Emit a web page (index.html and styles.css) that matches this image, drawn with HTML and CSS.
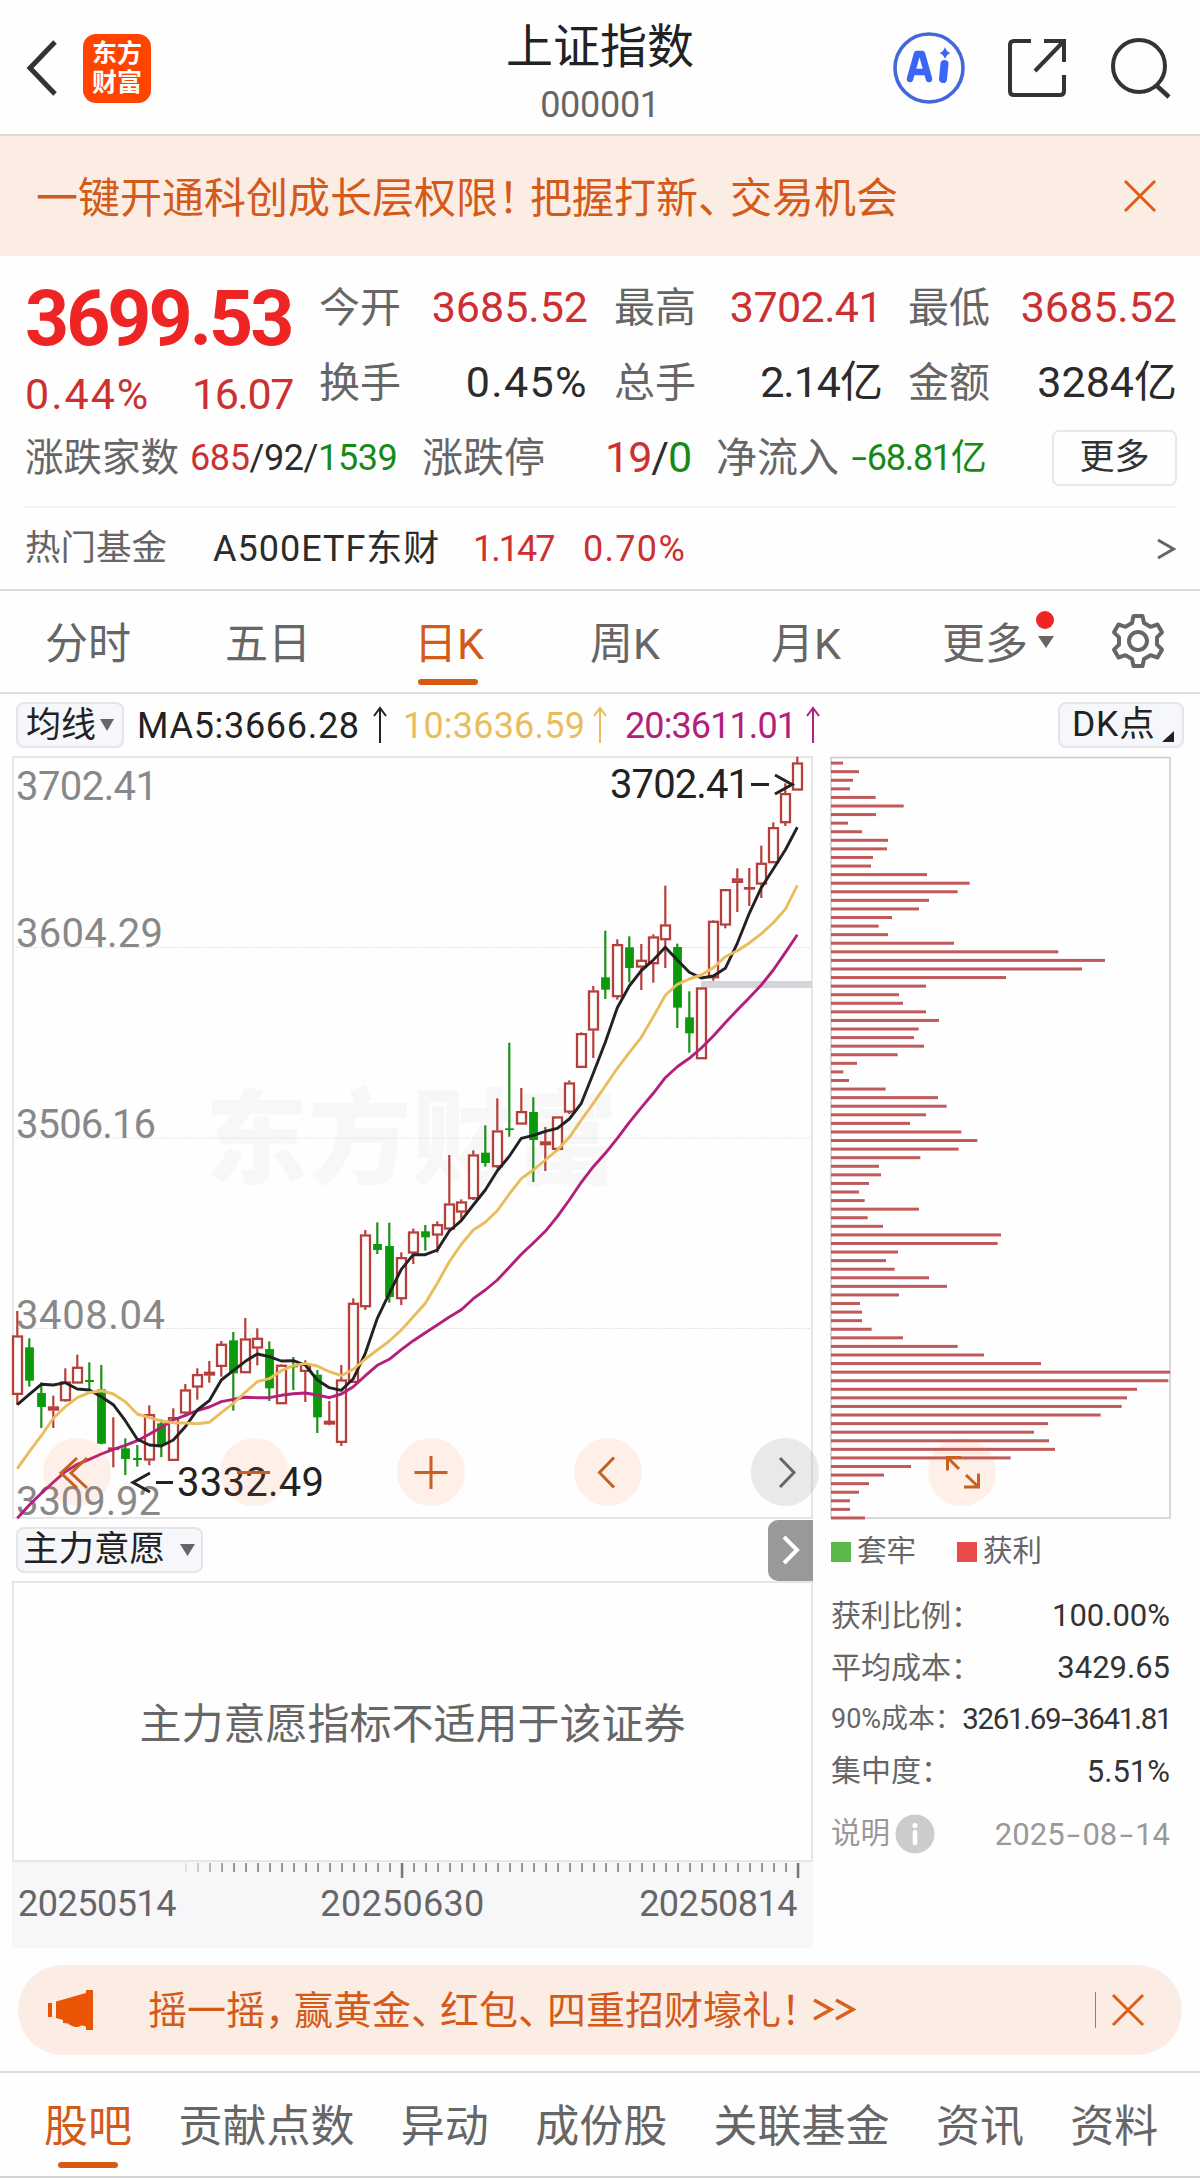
FILE: index.html
```html
<!DOCTYPE html>
<html lang="zh-CN">
<head>
<meta charset="utf-8">
<title>上证指数 000001</title>
<link rel="stylesheet" href="styles.css">
</head>
<body>
<header class="topbar">
  <div class="topbar-left">
    <svg class="back" width="34" height="58" viewBox="0 0 34 58"><path d="M30 3 5 29l25 26" fill="none" stroke="#333" stroke-width="5"/></svg>
    <div class="logo"><span>东方</span><span>财富</span></div>
  </div>
  <div class="topbar-title">
    <h1>上证指数</h1>
    <div class="code">000001</div>
  </div>
  <div class="topbar-right">
    <svg width="74" height="74" viewBox="0 0 74 74">
      <circle cx="37" cy="37" r="34" fill="none" stroke="#4468dc" stroke-width="3.6"/>
      <path d="M18 48 25 23h5l7 25M21 41h13" fill="none" stroke="#3a66f6" stroke-width="6.5" stroke-linejoin="round" stroke-linecap="round"/>
      <path d="M52.500 33 51 48" stroke="#3a66f6" stroke-width="8" stroke-linecap="round"/>
      <path d="M53 16q1.500 5 5.500 6-4 1.500-5.500 6-1.500-4.500-5.500-6 4-1 5.500-6z" fill="#3a66f6"/>
    </svg>
    <svg width="60" height="60" viewBox="0 0 60 60"><path d="M23 3H6q-4 0-4 4v46q0 4 4 4h46q4 0 4-4V37M36 3h20v21M55 4 27 33" fill="none" stroke="#333" stroke-width="4"/></svg>
    <svg width="62" height="62" viewBox="0 0 62 62"><circle cx="29" cy="29" r="26" fill="none" stroke="#333" stroke-width="4"/><path d="m47 49 12 11" stroke="#333" stroke-width="4.500"/></svg>
  </div>
</header>

<section class="promo">
  <span class="promo-text">一键开通科创成长层权限<i class="tight">！</i>把握打新<i class="tight">、</i>交易机会</span>
  <svg width="34" height="34" viewBox="0 0 34 34"><path d="m2 2 30 30M32 2 2 32" stroke="#de5d17" stroke-width="3"/></svg>
</section>

<section class="quote">
  <div class="quote-top">
    <div class="price">
      <div class="last">3699.53</div>
      <div class="change"><span class="pct">0.44%</span><span class="amt">16.07</span></div>
    </div>
    <dl class="stats">
      <div><dt>今开</dt><dd class="up">3685.52</dd></div>
      <div><dt>最高</dt><dd class="up high">3702.41</dd></div>
      <div><dt>最低</dt><dd class="up">3685.52</dd></div>
      <div><dt>换手</dt><dd class="wide">0.45%</dd></div>
      <div><dt>总手</dt><dd class="narrow">2.14亿</dd></div>
      <div><dt>金额</dt><dd>3284亿</dd></div>
    </dl>
  </div>
  <div class="breadth">
    <span class="lbl-s">涨跌家数</span>
    <span class="counts"><b class="up">685</b>/92/<b class="down">1539</b></span>
    <span class="lbl halt">涨跌停</span>
    <span class="limits"><b class="up">19</b>/<b class="down">0</b></span>
    <span class="lbl">净流入</span>
    <span class="flow down"><i class="dash">-</i>68.81亿</span>
    <button class="more">更多</button>
  </div>
  <div class="fund">
    <span class="fund-label">热门基金</span>
    <span class="fund-name">A500ETF东财</span>
    <span class="up fund-price">1.147</span>
    <span class="up fund-pct">0.70%</span>
    <svg class="fund-go" width="20" height="24" viewBox="0 0 20 24"><path d="m1 3 15.500 9L1 21" fill="none" stroke="#666" stroke-width="3"/></svg>
  </div>
</section>

<nav class="periods">
  <span>分时</span><span>五日</span><span class="active">日K</span><span>周K</span><span>月K</span>
  <span class="drop">更多<svg width="16" height="12" viewBox="0 0 16 12"><path d="M0 0h16L8 12z" fill="#666"/></svg></span>
  <svg class="gear" width="56" height="56" viewBox="0 0 56 56"><path d="M23.500 3h9l1.500 7 6.500 3.800 7-2.300 4.500 7.800-5 5v7.400l5 5-4.500 7.800-7-2.300L34 46l-1.500 7h-9L22 46l-6.500-3.800-7 2.300L4 36.700l5-5v-7.400l-5-5 4.500-7.800 7 2.300L22 10z" fill="none" stroke="#666" stroke-width="4" stroke-linejoin="round"/><circle cx="28" cy="28" r="9" fill="none" stroke="#666" stroke-width="4"/></svg>
</nav>

<section class="indicators">
  <button class="chip ma-chip">均线<svg width="14" height="12" viewBox="0 0 14 12"><path d="M0 0h14L7 12z" fill="#666"/></svg></button>
  <span class="ma5">MA5:3666.28</span><svg class="arrow" width="14" height="36" viewBox="0 0 14 36"><path d="M7 36V2M1 9l6-8 6 8" fill="none" stroke="#222" stroke-width="2"/></svg>
  <span class="ma10">10:3636.59</span><svg class="arrow" width="14" height="36" viewBox="0 0 14 36"><path d="M7 36V2M1 9l6-8 6 8" fill="none" stroke="#e9bd5c" stroke-width="2"/></svg>
  <span class="ma20">20:3611.01</span><svg class="arrow" width="14" height="36" viewBox="0 0 14 36"><path d="M7 36V2M1 9l6-8 6 8" fill="none" stroke="#b2207c" stroke-width="2"/></svg>
  <button class="chip dk-chip">DK点<svg width="12" height="11" viewBox="0 0 12 11"><path d="M12 0v11H0z" fill="#222"/></svg></button>
</section>

<main class="charts">
  <div class="main-col">
    <svg class="kline" id="kline" width="804" height="763" viewBox="12 756 804 763"></svg>
    <div class="sub-head">
      <button class="chip sub-chip">主力意愿<svg width="15" height="12" viewBox="0 0 15 12"><path d="M0 0h15L7.500 12z" fill="#666"/></svg></button>
      <button class="fold"><svg width="20" height="30" viewBox="0 0 20 30"><path d="m3 2 13 13L3 28" fill="none" stroke="#fff" stroke-width="4"/></svg></button>
    </div>
    <div class="sub-pane">主力意愿指标不适用于该证券</div>
    <div class="axis">
      <svg id="ticks" width="801" height="18" viewBox="12 1862 801 18"></svg>
      <div class="dates"><span>20250514</span><span class="mid">20250630</span><span>20250814</span></div>
    </div>
  </div>
  <aside class="chips-col">
    <svg id="profile" width="342" height="763" viewBox="830 756 342 763"></svg>
    <div class="legend"><i class="sq green"></i><span>套牢</span><i class="sq red"></i><span>获利</span></div>
    <dl class="cost">
      <div><dt>获利比例：</dt><dd>100.00%</dd></div>
      <div><dt>平均成本：</dt><dd>3429.65</dd></div>
      <div class="range"><dt>90%成本：</dt><dd>3261.69<i class="dash">-</i>3641.81</dd></div>
      <div><dt>集中度：</dt><dd>5.51%</dd></div>
    </dl>
    <div class="note">
      <span>说明</span>
      <svg width="40" height="40" viewBox="0 0 40 40"><circle cx="20" cy="20" r="19.500" fill="#ccc"/><circle cx="20" cy="11.500" r="2.600" fill="#fff"/><path d="M20 18v11" stroke="#fff" stroke-width="4.600" stroke-linecap="round"/></svg>
      <span class="note-date">2025<i class="dash">-</i>08<i class="dash">-</i>14</span>
    </div>
  </aside>
  <div class="controls">
    <button><svg width="68" height="68" viewBox="0 0 68 68"><path d="M34 20 18 35l16 15M44 20 28 35l16 15"/></svg></button>
    <button><svg width="68" height="68" viewBox="0 0 68 68"><path d="M17 34.500h33"/></svg></button>
    <button><svg width="68" height="68" viewBox="0 0 68 68"><path d="M17.500 34.500h33M34 18v33"/></svg></button>
    <button><svg width="68" height="68" viewBox="0 0 68 68"><path d="M40 19.500 25.500 34.500 40 49.500"/></svg></button>
    <button class="mute"><svg width="68" height="68" viewBox="0 0 68 68"><path d="M29 20 43 34.500 29 49"/></svg></button>
    <button><svg width="68" height="68" viewBox="0 0 68 68"><path d="M19.500 32.500V19.500H33M20 20l11 11M50.500 35.500V49H36M50 48.500 38 37"/></svg></button>
  </div>
</main>

<section class="shake">
  <svg width="46" height="40" viewBox="0 0 46 40"><path d="M0 13h4v14H0zM8 11.500 38 3V0h7v40h-7v-3.500l-4.500-1.300q-3.500 3-8 1.300t-5.500-3l-5-.500V30L8 28z" fill="#e95504"/></svg>
  <span class="shake-text">摇一摇<i class="tight">，</i>赢黄金<i class="tight">、</i>红包<i class="tight">、</i>四重招财壕礼<i class="tight">！</i></span>
  <svg class="dbl" width="42" height="24" viewBox="0 0 42 24"><path d="m1 2 17 9.500L1 21M23 2l17 9.500L23 21" fill="none" stroke="#d9601f" stroke-width="3.500"/></svg>
  <i class="bar"></i>
  <svg width="34" height="34" viewBox="0 0 34 34"><path d="m2 2 30 30M32 2 2 32" stroke="#de5d17" stroke-width="3"/></svg>
</section>

<nav class="bottom-tabs">
  <span class="active">股吧</span><span>贡献点数</span><span>异动</span><span>成份股</span><span>关联基金</span><span>资讯</span><span>资料</span>
</nav>
<script src="chart.js"></script>
</body>
</html>
```
FILE: styles.css
```css
* { box-sizing: border-box; }
body, h1, dl, dd { margin: 0; }
body {
  width: 1200px;
  background: #fefefe;
  color: #2b2b2b;
  font-family: Roboto, "Noto Sans CJK SC", sans-serif;
  line-height: 1;
  white-space: nowrap;
}
i, b { font-style: normal; font-weight: 400; }
svg { display: block; flex: none; overflow: visible; }
button { font: inherit; color: inherit; border: 0; padding: 0; background: none; }
.up { color: #cc3030; }
.down { color: #168a16; }
.tight { letter-spacing: -10px; }
.dash { display: inline-block; transform: scaleX(1.55); margin: 0 .12em 0 .08em; }

/* top bar */
.topbar {
  height: 136px;
  display: grid;
  grid-template-columns: 1fr auto 1fr;
  border-bottom: 2px solid #dadada;
}
.topbar-left { display: flex; align-items: center; padding: 2px 0 0 25px; gap: 24px; }
.logo {
  width: 68px; height: 69px; border-radius: 13px; background: #ff4400; color: #fff;
  display: flex; flex-direction: column; align-items: center; justify-content: center;
  font-size: 25px; font-weight: 700; line-height: 29px;
}
.topbar-title { text-align: center; padding-top: 20px; }
.topbar-title h1 { font-size: 47px; font-weight: 400; line-height: 54px; color: #222; }
.code { font-size: 36px; line-height: 40px; margin-top: 11px; color: #666; letter-spacing: -.3px; }
.topbar-right { display: flex; align-items: center; justify-content: flex-end; padding: 2px 28px 0 0; gap: 42px; }

/* promo strip */
.promo {
  height: 120px; background: #fcede4; color: #d45a1a;
  display: flex; align-items: center; justify-content: space-between;
  padding: 0 43px 0 36px; font-size: 42px;
}
.promo-text { padding-top: 5px; }

/* quote */
.quote { height: 335px; }
.quote-top {
  display: grid; grid-template-columns: 268px 858px; column-gap: 26px;
  height: 164px; padding: 14px 23px 0 25px;
}
.price { padding-top: 9px; }
.last { font-size: 77px; font-weight: 700; line-height: 80px; letter-spacing: -3px; color: #ee2524; }
.change { display: flex; justify-content: space-between; font-size: 43px; line-height: 70px; color: #cc3030; }
.pct { letter-spacing: 2px; }
.amt { letter-spacing: -1.4px; }
.stats { display: grid; grid-template-columns: 269px 268px 269px; column-gap: 26px; grid-auto-rows: 75px; }
.stats > div { display: flex; align-items: center; justify-content: space-between; }
.stats dt, .lbl { font-size: 41px; color: #666; padding-top: 2px; }
.stats dd { font-size: 43px; }
.stats .high { letter-spacing: -.6px; }
.stats .wide { letter-spacing: 1.4px; }
.stats .narrow { letter-spacing: -1px; }
.breadth { height: 75px; display: flex; align-items: center; padding: 0 23px 0 25px; }
.lbl-s { font-size: 38.500px; color: #666; width: 165px; padding-top: 1px; }
.counts { font-size: 36px; letter-spacing: -.4px; width: 232px; }
.halt { width: 183px; }
.limits { font-size: 43px; letter-spacing: -1px; width: 111px; }
.flow { font-size: 36px; letter-spacing: -1.3px; margin-left: 12px; }
.more {
  margin-left: auto; width: 125px; height: 56px; border: 2px solid #e8e8e8; border-radius: 7px;
  font-size: 35px; color: #333;
}
.fund {
  height: 85px; margin-top: 11px; border-bottom: 2px solid #dcdcdc;
  background: linear-gradient(#f3f3f3, #f3f3f3) 24px 0 / 1152px 2px no-repeat;
  display: flex; align-items: center; padding: 2px 24px 0 25px; font-size: 36px;
}
.fund-label { font-size: 35.500px; color: #666; width: 188px; }
.fund-name { width: 260px; letter-spacing: 1px; }
.fund-price { width: 110px; letter-spacing: -2px; }
.fund-pct { letter-spacing: 1.3px; }
.fund-go { margin-left: auto; margin-right: -1px; }

/* period tabs */
.periods {
  height: 103px; border-bottom: 2px solid #dcdcdc; color: #666; font-size: 43px;
  display: grid; grid-template-columns: 180px 189px 176px 181px 171px 168px 56px;
  align-items: center; padding: 0 0 0 45px;
}
.periods span { padding-top: 5px; }
.active { color: #d45a1a; position: relative; }
.active::after {
  content: ""; position: absolute; width: 60px; height: 6px; border-radius: 3px; background: #d75a14;
}
.periods .active::after { left: 4px; bottom: -19px; }
.drop { position: relative; display: flex; align-items: center; gap: 10px; }
.drop svg { margin-top: -5px; }
.drop::after {
  content: ""; position: absolute; left: 94px; top: -7px; width: 18px; height: 18px;
  border-radius: 50%; background: #ee2524;
}
.gear { margin-top: -2px; }

/* indicator line */
.indicators { height: 62px; display: flex; align-items: center; padding: 0 16px; font-size: 36px; }
.chip {
  height: 46px; background: #f6f7fa; border: 2px solid #e3e5e9; border-radius: 8px;
  display: flex; align-items: center; color: #222;
}
.ma-chip { width: 108px; padding-left: 8px; gap: 4px; font-size: 35px; margin-right: 13px; }
.ma5 { width: 236px; color: #222; letter-spacing: .7px; padding-top: 2px; }
.ma10 { width: 190px; margin-left: 16px; color: #e9bd5c; letter-spacing: .2px; padding-top: 2px; }
.ma20 { width: 181px; margin-left: 18px; color: #b2207c; letter-spacing: -.9px; padding-top: 2px; }
.dk-chip { width: 126px; margin-left: auto; padding-left: 12px; font-size: 35.500px; letter-spacing: .8px; }
.dk-chip svg { align-self: flex-end; margin: 0 0 4px 7px; }

/* charts */
.charts { position: relative; display: flex; padding-left: 12px; height: 1192px; }
.main-col { width: 804px; margin-right: 14px; }
.chips-col { width: 342px; }
.sub-head { display: flex; justify-content: space-between; align-items: center; height: 62px; width: 801px; padding-left: 4px; }
.sub-chip { width: 187px; padding-left: 5px; gap: 15px; font-size: 35.500px; }
.fold {
  width: 45px; height: 61px; border-radius: 10px 0 0 10px; background: #999;
  display: flex; align-items: center; justify-content: center;
}
.sub-pane {
  width: 801px; height: 281px; border: 2px solid #e6e6e6;
  display: flex; align-items: center; justify-content: center;
  font-size: 42px; color: #666; padding-top: 6px;
}
.axis { width: 801px; height: 86px; background: #f7f7fa; }
.dates { display: flex; justify-content: space-between; padding: 6px 16px 0 6px; font-size: 36px; line-height: 36px; color: #666; letter-spacing: -.5px; }
.dates .mid { letter-spacing: .3px; margin-left: -10px; }
.legend { display: flex; align-items: center; height: 65px; font-size: 29.500px; color: #666; }
.sq { width: 20px; height: 20px; margin: 0 6px 0 1px; }
.green { background: #5cb848; }
.red { background: #e84c4a; margin-left: 41px; }
.cost { margin-top: 6px; color: #333; }
.cost > div { display: flex; justify-content: space-between; align-items: center; height: 51.800px; padding: 0 2px 0 1px; }
.cost dt { color: #666; font-size: 30px; }
.cost dd { font-size: 31px; }
.cost .range dt { font-size: 27px; }
.cost .range dd { font-size: 29.500px; letter-spacing: -1.3px; margin-right: -1px; }
.note { display: flex; align-items: center; height: 72px; padding: 0 2px 0 1px; color: #999; font-size: 29.500px; margin-top: 1px; }
.note svg { margin-left: 5px; }
.note-date { margin-left: auto; font-size: 31px; }
.note-date .dash { margin: 0 .16em 0 .14em; }

/* floating chart controls */
.controls { position: absolute; left: 43px; top: 682px; display: flex; gap: 109px; }
.controls button { width: 68px; height: 68px; border-radius: 50%; background: rgba(255, 110, 50, .1); }
.controls path { fill: none; stroke: #c8601f; stroke-width: 3; }
.controls .mute { background: rgba(150, 150, 150, .2); }
.controls .mute path { stroke: #666; }

/* campaign pill */
.shake {
  margin: 17px 18px 0; height: 90px; border-radius: 45px; background: #fcede4; color: #d45a1a;
  display: flex; align-items: center; padding: 0 37px 0 30px; font-size: 39px;
}
.shake-text { margin-left: 54px; padding-top: 3px; }
.dbl { margin-left: 3px; }
.bar { width: 1.500px; height: 36px; background: #b9744a; margin: 0 15px 0 auto; }

/* bottom tabs */
.bottom-tabs {
  margin-top: 16px; height: 107px; border-top: 2px solid #dcdcdc; border-bottom: 2px solid #d4d4d4;
  display: flex; gap: 46.400px; align-items: center; padding: 4px 0 0 44px; font-size: 44px; color: #666;
}
.bottom-tabs .active::after { left: 14px; bottom: -19px; }

/* chart drawing */
.frame { fill: none; stroke: #e6e6e6; stroke-width: 2; }
.frame-dark { fill: none; stroke: #ccc; stroke-width: 1.500; }
.grid { stroke: #dcdcdc; stroke-width: 1; stroke-dasharray: 1.500 1.500; }
.mark { fill: #f7f7f7; font-size: 103px; font-weight: 900; }
.scale { fill: #888; font-size: 40px; }
.callout { fill: #222; font-size: 40px; }
.candle-up { fill: #fff; stroke: #b5403b; stroke-width: 2.300; }
.candle-down { fill: #0a9a0a; }
.wick-up { stroke: #b5403b; stroke-width: 2.200; }
.wick-down { stroke: #1c911c; stroke-width: 2.200; }
.line { fill: none; stroke-width: 2.900; stroke-linejoin: round; }
.profile-bar { fill: #c05a5a; }
```
FILE: chart.js
```js
const NS = 'http://www.w3.org/2000/svg';
function add(parent, tag, attrs, text) {
  const el = document.createElementNS(NS, tag);
  for (const k in attrs) el.setAttribute(k, attrs[k]);
  if (text) el.textContent = text;
  parent.appendChild(el);
}
const x = i => 17.3 + 12 * i;
// Values are thirds of a pixel, counted from the base of each block.
const blocks = [
  [1230, [
    'r243,317,494,525','g325,352,452,470','g457,489,531,594','r497,530,541,594','r415,455,513,515',
    'r374,411,460,460','g397,450,456,480','g405,478,641,643','r562,653,656,712','g625,655,687,735',
    'g645,684,690,710','r526,553,691,706','g568,580,645,681','r535,562,692,692','r462,479,550,560',
    'r415,433,472,509','r393,426,436,458','r333,342,410,440','g306,331,430,542','r264,326,429,429',
    'r295,324,355,406','g334,357,475,513','r403,405,522,522','g381,408,412,480','r391,402,425,516',
    'g420,434,562,609','r513,573,583,586','r405,449,638,648','r205,219,458,458']],
  [1060, [
    'r510,524,741,750','g487,552,570,582','g488,558,711,728','r577,592,717,735','r506,515,580,612',
    'g495,514,532,572','r484,493,526,578','r285,431,508,515','r418,425,457,480','r271,284,417,420',
    'g196,278,309,320','r115,212,321,325','g-52,205,210,230','r84,154,193,193','g112,156,240,366',
    'r201,245,255,333','r170,170,269,272','r61,68,157,162']],
  [740, [
    'r877,880,983,983','r738,752,871,954','g572,712,749,777','r598,613,771,779','g589,622,684,727',
    'r612,660,682,750','r583,590,672,728','r437,554,600,684','g611,621,803,864','g754,832,880,938',
    'r743,743,957,957','r541,543,714,722','r447,448,556,565','r385,416,428,516','r384,442,446,498',
    'r317,369,433,474','r247,262,369,369','r130,160,249,258','r50,68,151,151']]
];
const lines = {
  '#b2207c': [
    [1230, [865,825,790,757,725,703,688,672,658,646,632,613,592,570,556,542,531,515,508,502,503,503,496,491,489,495,503,492,470]],
    [1060, [947,916,898,869,842,818,795,771,749,716,690,660,622,583,549,514,470,420,367,320,280,235,187,143,100]],
    [740, [1013,980,955,924,888,848,810,773,735,690,638,584]]],
  '#222': [
    [1230, [524,493,463,465,458,477,480,500,524,572,628,645,648,630,590,540,512,450,422,394,372,380,393,392,405,450,473,481,446]],
    [1060, [880,775,700,628,584,584,570,513,482,435,390,332,289,235,226,214,205,177,130]],
    [740, [1000,907,803,738,692,660,622,660,697,714,708,685,610,520,443,387,330,262]]],
  '#e9bd5c': [
    [1230, [716,665,617,565,530,503,488,482,492,515,552,563,573,578,579,581,577,548,520,487,455,446,422,407,400,408,425,437,418]],
    [1060, [897,870,843,810,770,730,670,605,553,510,487,452,402,356,330,300,270,232,180]],
    [740, [1090,1038,985,938,892,830,766,733,717,705,683,650,632,609,581,548,508,436]]]
};
const k = document.getElementById('kline');
add(k, 'text', {class: 'mark', x: 205, y: 1176, textLength: 413}, '东方财富');
[947.5, 1138, 1328.5].forEach(y => add(k, 'line', {class: 'grid', x1: 13, x2: 812, y1: y, y2: y}));
add(k, 'rect', {class: 'frame', x: 13, y: 757, width: 799, height: 761});
[[800, '3702.41', 142], [947, '3604.29', 147], [1138, '3506.16', 140], [1329, '3408.04', 149], [1515, '3309.92', 145]]
  .forEach(([y, t, w]) => add(k, 'text', {class: 'scale', x: 16, y, textLength: w}, t));
add(k, 'rect', {x: 701, y: 981, width: 111, height: 7, fill: '#d3d5db'});
let i = 0;
blocks.forEach(([base, rows]) => rows.forEach(row => {
  const [hi, top, bot, lo] = row.slice(1).split(',').map(v => base + v / 3);
  const cx = x(i++);
  if (row[0] === 'r') {
    add(k, 'line', {class: 'wick-up', x1: cx, x2: cx, y1: hi, y2: top});
    add(k, 'line', {class: 'wick-up', x1: cx, x2: cx, y1: bot, y2: lo});
    add(k, 'rect', {class: 'candle-up', x: cx - 4.3, y: top + .8, width: 9, height: Math.max(bot - top - 1.6, .4)});
  } else {
    add(k, 'line', {class: 'wick-down', x1: cx, x2: cx, y1: hi, y2: lo});
    add(k, 'rect', {class: 'candle-down', x: cx - 4.2, y: top, width: 8.8, height: bot - top});
  }
}));
for (const color in lines) {
  let n = 0;
  const pts = lines[color].flatMap(([base, vs]) => vs.map(v => x(n++) + ',' + (base + v / 3).toFixed(1)));
  add(k, 'polyline', {class: 'line', points: pts.join(' '), stroke: color});
}
add(k, 'text', {class: 'callout', x: 610, y: 798, textLength: 140}, '3702.41');
add(k, 'path', {d: 'M751 784.500h18M775 775l17 9.500-17 9.500', fill: 'none', stroke: '#222', 'stroke-width': 3});
add(k, 'text', {class: 'callout', x: 177, y: 1496, textLength: 147}, '3332.49');
add(k, 'path', {d: 'M156 1482.500h17M150 1473l-17 9.500 17 9.500', fill: 'none', stroke: '#222', 'stroke-width': 3});

const t = document.getElementById('ticks');
for (let n = 14; n <= 65; n++) {
  const big = n === 32 || n === 65;
  add(t, 'rect', {x: x(n) - (big ? .5 : 0), y: 1863, width: big ? 2.5 : 1.5, height: big ? 15 : 9, fill: '#777', opacity: Math.min(1, (n - 13) * .22)});
}

const ends = [69,117,99,90,167,251,168,84,126,204,201,159,153,321,449,413,327,297,216,176,204,402,715,855,786,558,318,237,249,318,357,296,282,312,233,111,70,87,197,354,380,318,270,424,
  472,416,301,177,183,147,117,134,297,143,189,543,533,234,198,224,327,381,237,120,126,126,155,249,413,492,663,1050,1045,951,921,905,842,684,642,687,705,572,273,192,147,117,90,90,135];
const p = document.getElementById('profile');
add(p, 'rect', {class: 'frame-dark', x: 831, y: 757.5, width: 339, height: 760.5});
ends.forEach((e, n) => add(p, 'rect', {class: 'profile-bar', x: 831, y: 761.6 + n * 8.578, width: (e - 33) / 3, height: 3}));
```
